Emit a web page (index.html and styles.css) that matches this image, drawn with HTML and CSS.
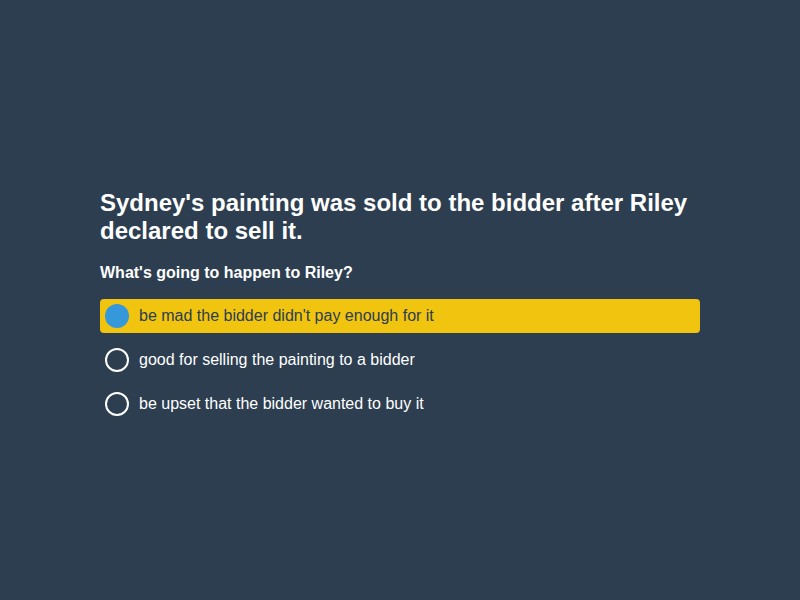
FILE: index.html
```html
<!DOCTYPE html>
<html>
<head>
<meta charset="utf-8">
<link rel="stylesheet" href="styles.css">
</head>
<body>
<main class="quiz">
  <h1 class="title">Sydney's painting was sold to the bidder after Riley declared to sell it.</h1>
  <h2 class="question">What's going to happen to Riley?</h2>
  <ul class="options">
    <li class="option selected"><span class="radio"></span><span class="label">be mad the bidder didn't pay enough for it</span></li>
    <li class="option"><span class="radio"></span><span class="label">good for selling the painting to a bidder</span></li>
    <li class="option"><span class="radio"></span><span class="label">be upset that the bidder wanted to buy it</span></li>
  </ul>
</main>
</body>
</html>
```
FILE: styles.css
```css
html, body {
  margin: 0;
  padding: 0;
  height: 100%;
  background: #2c3e50;
}
body {
  display: flex;
  align-items: center;
  justify-content: center;
  font-family: "Liberation Sans", Arial, sans-serif;
  color: #ffffff;
}
.quiz {
  width: 600px;
  padding-top: 10px;
}
.title {
  margin: 0 0 18px;
  font-size: 24px;
  line-height: 28px;
  font-weight: bold;
}
.question {
  margin: 0 0 16px;
  font-size: 16px;
  line-height: 20px;
  font-weight: bold;
}
.options {
  list-style: none;
  margin: 0;
  padding: 0;
  display: flex;
  flex-direction: column;
  gap: 10px;
}
.option {
  display: flex;
  align-items: center;
  height: 34px;
  padding: 0 5px;
  border-radius: 4px;
  font-size: 16px;
  gap: 10px;
}
.radio {
  width: 20px;
  height: 20px;
  border: 2px solid #ffffff;
  border-radius: 50%;
  flex: none;
}
.selected {
  background: #f1c40f;
  color: #2c3e50;
}
.selected .radio {
  width: 24px;
  height: 24px;
  border: none;
  background: #3498db;
}
```
